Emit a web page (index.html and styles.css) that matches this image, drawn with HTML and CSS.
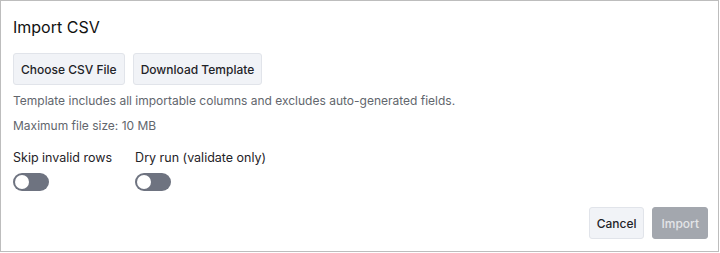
FILE: index.html
```html
<!DOCTYPE html>
<html lang="en">
<head>
    <meta charset="UTF-8">
    <title>Import CSV</title>
    <link rel="stylesheet" href="styles.css">
</head>
<body>
    <div class="dialog">
        <h2 class="dialog-title">Import CSV</h2>

        <div class="file-actions">
            <button class="btn">Choose CSV File</button>
            <button class="btn">Download Template</button>
        </div>

        <p class="hint">Template includes all importable columns and excludes auto-generated fields.</p>
        <p class="hint">Maximum file size: 10 MB</p>

        <div class="options">
            <label class="option">
                <span class="option-label">Skip invalid rows</span>
                <span class="toggle"></span>
            </label>
            <label class="option">
                <span class="option-label">Dry run (validate only)</span>
                <span class="toggle"></span>
            </label>
        </div>

        <div class="dialog-footer">
            <button class="btn">Cancel</button>
            <button class="btn btn-primary" disabled>Import</button>
        </div>
    </div>
</body>
</html>
```

FILE: styles.css
```css
body {
    margin: 0;
    padding: 0;
    background-color: #fff;
    font-family: Inter, "Noto Sans", sans-serif;
    color: #1f2328;
}

.dialog {
    box-sizing: border-box;
    width: 719px;
    height: 252px;
    border: 1px solid #bdbdbd;
    padding: 15px 10px 12px 12px;
    display: flex;
    flex-direction: column;
}

.dialog-title {
    margin: 0;
    font-size: 16px;
    font-weight: 400;
    line-height: 22px;
    color: #111;
}

.file-actions {
    display: flex;
    gap: 8px;
    margin-top: 15px;
}

.btn {
    font-family: inherit;
    font-size: 12px;
    font-weight: 500;
    color: #1f2328;
    background-color: #f1f3f7;
    border: 1px solid #e1e4ea;
    border-radius: 3px;
    height: 32px;
    padding: 0 7px;
}

.hint {
    margin: 8px 0 0 0;
    font-size: 12px;
    line-height: 16px;
    color: #62666d;
}

.hint + .hint {
    margin-top: 9px;
}

.options {
    display: flex;
    gap: 23px;
    margin-top: 16px;
}

.option {
    display: flex;
    flex-direction: column;
    gap: 7px;
}

.option-label {
    font-size: 12.5px;
    line-height: 16px;
    color: #1f2328;
}

.toggle {
    position: relative;
    width: 36px;
    height: 18px;
    border-radius: 9px;
    background-color: #6e7380;
}

.toggle::after {
    content: "";
    position: absolute;
    left: 2px;
    top: 2px;
    width: 14px;
    height: 14px;
    border-radius: 50%;
    background-color: #fff;
}

.dialog-footer {
    margin-top: auto;
    display: flex;
    justify-content: flex-end;
    gap: 8px;
}

.btn-primary {
    background-color: #a3a7ae;
    border-color: #a3a7ae;
    color: #e3e5e8;
    padding: 0 8px;
}
```
